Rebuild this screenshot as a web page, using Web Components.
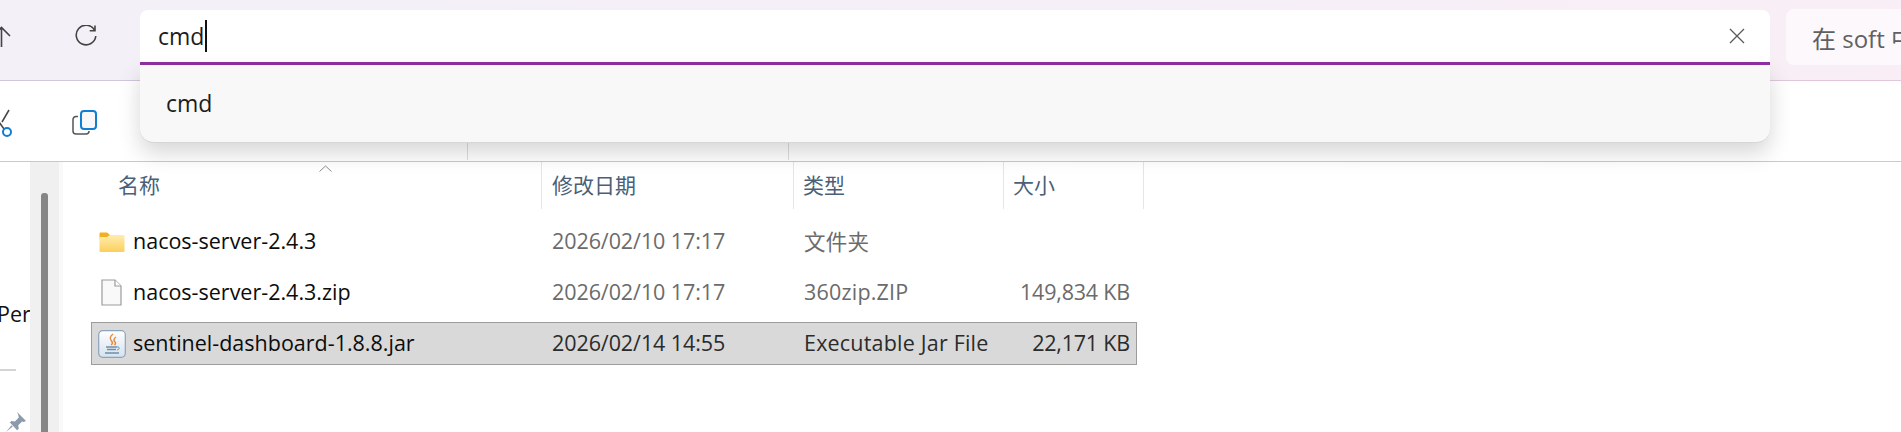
<!DOCTYPE html>
<html>
<head>
<meta charset="utf-8">
<title>Explorer</title>
<style>
  html, body { margin: 0; height: 100%; background: #fff; overflow: hidden; }
  body { font-family: "Open Sans", "Noto Sans CJK SC", sans-serif; }
</style>
</head>
<body>
<explorer-window>
  <title-bar></title-bar>
  <tool-bar></tool-bar>
  <div style="display:flex">
    <side-pane></side-pane>
    <file-list>
      <file-row icon="folder" name="nacos-server-2.4.3" date="2026/02/10 17:17" type="文件夹" size=""></file-row>
      <file-row icon="file" name="nacos-server-2.4.3.zip" date="2026/02/10 17:17" type="360zip.ZIP" size="149,834 KB"></file-row>
      <file-row icon="java" selected name="sentinel-dashboard-1.8.8.jar" date="2026/02/14 14:55" type="Executable Jar File" size="22,171 KB"></file-row>
    </file-list>
  </div>
</explorer-window>
<script>
class ExplorerWindow extends HTMLElement {
  constructor() {
    super();
    this.attachShadow({ mode: 'open' });
    this.shadowRoot.innerHTML = `
      <style>
        :host { display: flex; flex-direction: column; width: 1901px; height: 432px; overflow: hidden; position: relative; }
      </style>
      <slot></slot>
    `;
  }
}

class SearchBox extends HTMLElement {
  constructor() {
    super();
    this.attachShadow({ mode: 'open' });
    this.shadowRoot.innerHTML = `
      <style>
        :host { display: block; position: relative; flex: none; width: 1630px; height: 55px; z-index: 5; font-family: "Open Sans", sans-serif; }
        #input {
          box-sizing: border-box; height: 55px; background: #fff;
          border-radius: 8px 8px 0 0; border-bottom: 3px solid #8f2fa3;
          display: flex; align-items: center; padding: 0 25px 0 18px;
          font-size: 23px; color: #1c1c1c;
        }
        #caret { width: 2px; height: 32px; background: #111; margin-left: 1px; }
        #input svg { margin-left: auto; }
        #drop {
          position: absolute; left: 0; right: 0; top: 55px; height: 78px;
          box-sizing: border-box; background: #f8f8f8; border-radius: 0 0 14px 14px;
          border-bottom: 1px solid #d6d6d6;
          box-shadow: 0 10px 22px rgba(0,0,0,.16);
          padding: 23px 26px 0; font-size: 23px; line-height: 30px; color: #1c1c1c;
        }
      </style>
      <div id="input">
        <span>cmd</span><span id="caret"></span>
        <svg width="16" height="16" viewBox="0 0 16 16" fill="none" stroke="#5a5a5a" stroke-width="1.3"><path d="M1 1l14 14M15 1L1 15"/></svg>
      </div>
      <div id="drop">cmd</div>
    `;
  }
}

class TitleBar extends HTMLElement {
  constructor() {
    super();
    this.attachShadow({ mode: 'open' });
    this.shadowRoot.innerHTML = `
      <style>
        :host {
          display: flex; align-items: flex-start; box-sizing: border-box; height: 81px; padding-top: 10px;
          background: linear-gradient(90deg, #f3f0f8 0%, #f5eff7 60%, #f9eef6 100%);
          border-bottom: 1px solid; border-image: linear-gradient(90deg, #cfc6de, #e2c6da) 1;
          overflow: visible;
        }
        svg { flex: none; display: block; }
        #up { margin: 16px 0 0 -8px; }
        #reload { margin: 15px 0 0 63px; }
        search-box { margin-left: 43px; }
        #scope {
          flex: none; box-sizing: border-box; margin: -1px 0 0 16px; width: 115px; height: 56px;
          background: #fcf8fc; border-radius: 8px 0 0 8px; padding-left: 26px;
          display: flex; align-items: center; white-space: nowrap; overflow: hidden;
          font: 24px "Open Sans", "Noto Sans CJK SC", sans-serif; color: #606060;
        }
      </style>
      <svg id="up" width="20" height="22" viewBox="0 0 20 22" fill="none" stroke="#444" stroke-width="1.6"><path d="M1 10L9.500 1.500 18 10M9.500 2v19"/></svg>
      <svg id="reload" width="22" height="22" viewBox="0 0 22 22" fill="none" stroke="#444" stroke-width="1.6"><path d="M19.500 5A9.800 9.800 0 1 0 20.800 11"/><path d="M20 0.500V5.800H14.700"/></svg>
      <search-box></search-box>
      <div id="scope">在 soft 中</div>
    `;
  }
}

class ToolBar extends HTMLElement {
  constructor() {
    super();
    this.attachShadow({ mode: 'open' });
    this.shadowRoot.innerHTML = `
      <style>
        :host {
          display: flex; align-items: flex-start; box-sizing: border-box; height: 81px; background: #fff;
          border-bottom: 1px solid; border-image: linear-gradient(90deg, #cdc4da, #dcc0d4) 1;
          position: relative;
        }
        svg { flex: none; display: block; }
        #cut { margin: 27px 0 0 -6px; }
        #copy { margin: 29px 0 0 58px; }
        .sep { position: absolute; top: 49px; height: 30px; width: 1px; background: #dedede; }
      </style>
      <svg id="cut" width="20" height="30" viewBox="0 0 20 30" fill="none"><path d="M15 2L8 14" stroke="#444" stroke-width="1.5"/><path d="M5 14l5 7" stroke="#444" stroke-width="1.5"/><circle cx="13" cy="24" r="4" stroke="#0f7fd6" stroke-width="2"/></svg>
      <svg id="copy" width="26" height="26" viewBox="0 0 26 26" fill="none"><path d="M6 6.500H4a3 3 0 0 0-3 3V21a3 3 0 0 0 3 3h10a3 3 0 0 0 3-3" stroke="#555" stroke-width="1.500"/><rect x="9" y="1" width="15" height="18" rx="3" stroke="#0f7fd6" stroke-width="2" fill="#f8f8f8"/></svg>
      <div class="sep" style="left:467px"></div>
      <div class="sep" style="left:788px"></div>
    `;
  }
}

class SidePane extends HTMLElement {
  constructor() {
    super();
    this.attachShadow({ mode: 'open' });
    this.shadowRoot.innerHTML = `
      <style>
        :host { display: flex; flex: none; width: 59px; height: 270px; font: 21.500px "Open Sans", sans-serif; color: #111; }
        #nav { width: 30px; overflow: hidden; }
        #per { margin: 138px 0 0 -3px; line-height: 28px; white-space: nowrap; }
        #rule { width: 16px; height: 2px; background: #d4d4d4; margin-top: 41px; }
        #pin { display: block; margin: 41px 0 0 6px; }
        #track { width: 29px; background: #f0f0f0; padding-left: 11px; box-sizing: border-box; }
        #thumb { width: 7px; height: 100%; margin-top: 31px; background: #868686; border-radius: 3px 3px 0 0; }
      </style>
      <div id="nav">
        <div id="per">Per</div>
        <div id="rule"></div>
        <svg id="pin" width="20" height="20" viewBox="0 0 18 18" fill="#8b9bab"><path d="M10 0l8 8-2 1-1.500-.5-3.500 3.500.5 3-1.500 1.500L3.500 9.500 5 8l3 .5L11.500 5 11 2.500z"/><path d="M5 12L0 18l6-5z"/></svg>
      </div>
      <div id="track"><div id="thumb"></div></div>
    `;
  }
}

class FileList extends HTMLElement {
  constructor() {
    super();
    this.attachShadow({ mode: 'open' });
    this.shadowRoot.innerHTML = `
      <style>
        :host { display: block; flex: 1; border-left: 4px solid #f9f9f9; padding-left: 28px; color: #4a5f78; font: 21px "Noto Sans CJK SC", sans-serif; }
        #head { display: grid; grid-template-columns: 451px 252px 210px 140px; height: 47px; position: relative; }
        .col { box-sizing: border-box; border-right: 1px solid #e5e5e5; display: flex; align-items: center; padding-left: 10px; padding-bottom: 4px; }
        .col:first-child { padding-left: 27px; }
        .col:nth-child(3) { padding-left: 9px; }
        .col:nth-child(4) { padding-left: 9px; }
        #sort { position: absolute; left: 228px; top: 3px; }
        #rows { padding-top: 11px; display: flex; flex-direction: column; }
      </style>
      <div id="head">
        <div class="col">名称</div>
        <div class="col">修改日期</div>
        <div class="col">类型</div>
        <div class="col">大小</div>
        <svg id="sort" width="13" height="7" viewBox="0 0 13 7" fill="none" stroke="#8a8a8a"><path d="M.5 6.500l6-5.500 6 5.500"/></svg>
      </div>
      <div id="rows"><slot></slot></div>
    `;
  }
}

const FILE_ICONS = {
  folder: `<svg width="26" height="20" viewBox="0 0 26 20"><path d="M.5 1.500a1 1 0 0 1 1-1h6.500L11 3v4H.5z" fill="#f2b01e"/><path d="M.5 5L8 5 11 3H24.500A1 1 0 0 1 25.500 4V19a1 1 0 0 1-1 1h-23a1 1 0 0 1-1-1z" fill="url(#fg)"/><defs><linearGradient id="fg" x1="0" y1="0" x2="0" y2="1"><stop offset="0" stop-color="#ffedb0"/><stop offset="1" stop-color="#fccf5c"/></linearGradient></defs></svg>`,
  file: `<svg width="21" height="27" viewBox="0 0 21 27" fill="#f9f9f9" stroke="#9b9b9b" stroke-width="1.200"><path d="M1 1h13l6 6v19H1z"/><path d="M14 1v6h6" fill="#fff"/></svg>`,
  java: `<svg width="28" height="28" viewBox="0 0 28 28" fill="none"><rect x=".7" y=".7" width="26.600" height="26.600" rx="4" fill="url(#jg)" stroke="#8da4bd" stroke-width="1.200"/><path d="M15 4c-4 3-3 5-1.500 7s1 3-.5 4M18 7c-3 2-2 4-1 5s.5 2-.5 3" stroke="#e58a3c" stroke-width="1.500"/><path d="M8 17h11M9 19.500h9M7 23h14" stroke="#6f8ea9" stroke-width="1.400"/><path d="M19 17c3-.5 3 2.500 0 3" stroke="#6f8ea9"/><defs><linearGradient id="jg" x1="0" y1="0" x2="0" y2="1"><stop offset="0" stop-color="#ffffff"/><stop offset="1" stop-color="#d5e2ee"/></linearGradient></defs></svg>`
};

class FileRow extends HTMLElement {
  constructor() {
    super();
    this.attachShadow({ mode: 'open' });
  }
  connectedCallback() {
    const g = (k) => this.getAttribute(k) || '';
    this.shadowRoot.innerHTML = `
      <style>
        :host { display: block; margin-bottom: 8px; }
        #row {
          display: grid; grid-template-columns: 450px 252px 210px 126px; align-items: center;
          box-sizing: border-box; width: 1046px; height: 43px; border: 1px solid transparent;
          font: 21.500px "Open Sans", "Noto Sans CJK SC", sans-serif; color: #6b6b6b;
        }
        :host([selected]) #row { background: #d9d9d9; border-color: #9c9c9c; color: #2b2b2b; }
        #name { display: flex; align-items: center; color: #0c0c0c; white-space: nowrap; }
        #label, #date, #type, #size { padding-bottom: 2px; }
        #ico { width: 41px; flex: none; display: flex; justify-content: center; box-sizing: border-box; padding: 0 2px 0 0; }
        #date { white-space: nowrap; padding-left: 10px; letter-spacing: -.08px; }
        #type { white-space: nowrap; padding-left: 10px; letter-spacing: .2px; }
        #size { white-space: nowrap; text-align: right; letter-spacing: -.2px; }
      </style>
      <div id="row">
        <div id="name"><span id="ico">${FILE_ICONS[g('icon')]}</span><span id="label">${g('name')}</span></div>
        <div id="date">${g('date')}</div>
        <div id="type">${g('type')}</div>
        <div id="size">${g('size')}</div>
      </div>
    `;
  }
}

customElements.define('explorer-window', ExplorerWindow);
customElements.define('search-box', SearchBox);
customElements.define('title-bar', TitleBar);
customElements.define('tool-bar', ToolBar);
customElements.define('side-pane', SidePane);
customElements.define('file-list', FileList);
customElements.define('file-row', FileRow);
</script>
</body>
</html>
